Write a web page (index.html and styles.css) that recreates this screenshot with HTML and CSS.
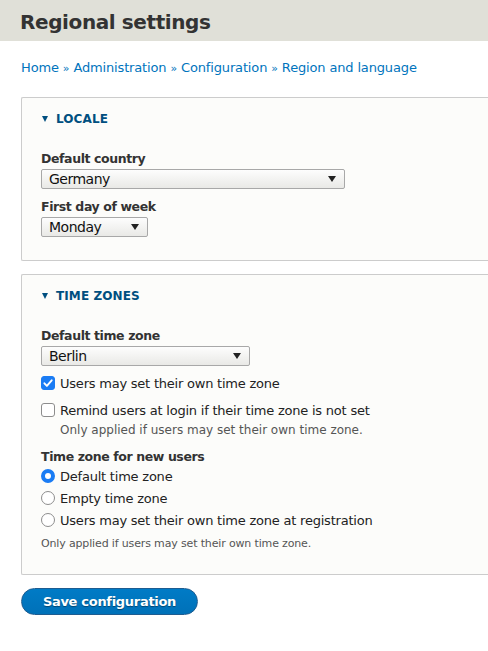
FILE: index.html
```html
<!DOCTYPE html>
<html>
<head>
<meta charset="utf-8">
<link rel="stylesheet" href="styles.css">
</head>
<body>
<header class="page-header">
  <h1 class="page-title">Regional settings</h1>
</header>
<main class="content">
  <nav class="breadcrumb">
    <a href="#">Home</a><span class="sep">»</span><a href="#">Administration</a><span class="sep">»</span><a href="#">Configuration</a><span class="sep">»</span><a href="#">Region and language</a>
  </nav>

  <section class="fieldset">
    <div class="legend"><span class="tri"></span>LOCALE</div>
    <div class="fs-body">
      <div class="item">
        <div class="label">Default country</div>
        <div class="select w-country"><span>Germany</span><span class="arrow"></span></div>
      </div>
      <div class="item">
        <div class="label">First day of week</div>
        <div class="select w-day"><span>Monday</span><span class="arrow"></span></div>
      </div>
    </div>
  </section>

  <section class="fieldset">
    <div class="legend"><span class="tri"></span>TIME ZONES</div>
    <div class="fs-body">
      <div class="item item-tight">
        <div class="label">Default time zone</div>
        <div class="select w-tz"><span>Berlin</span><span class="arrow"></span></div>
      </div>
      <div class="check-row">
        <span class="cb checked"><svg viewBox="0 0 14 14" width="14" height="14"><path d="M3.4 7.3 L5.9 9.9 L10.7 4.3" fill="none" stroke="#fff" stroke-width="1.9" stroke-linecap="round" stroke-linejoin="round"/></svg></span>
        <span class="opt">Users may set their own time zone</span>
      </div>
      <div class="check-row">
        <span class="cb"></span>
        <span class="opt">Remind users at login if their time zone is not set</span>
      </div>
      <div class="desc indent">Only applied if users may set their own time zone.</div>
      <div class="item radios">
        <div class="label">Time zone for new users</div>
        <div class="radio-row"><span class="rb checked"></span><span class="opt">Default time zone</span></div>
        <div class="radio-row"><span class="rb"></span><span class="opt">Empty time zone</span></div>
        <div class="radio-row"><span class="rb"></span><span class="opt">Users may set their own time zone at registration</span></div>
        <div class="desc small">Only applied if users may set their own time zone.</div>
      </div>
    </div>
  </section>

  <div class="actions">
    <button class="button-primary">Save configuration</button>
  </div>
</main>
</body>
</html>
```

FILE: styles.css
```css
* { box-sizing: border-box; }
html, body { margin: 0; padding: 0; }
body {
  background: #fff;
  color: #333;
  font-family: "DejaVu Sans", "Liberation Sans", sans-serif;
  font-size: 13px;
  width: 488px;
  overflow: hidden;
}
.page-header {
  background: #e0e0d8;
  height: 41px;
  padding: 0 20px;
  display: flex;
  align-items: center;
}
.page-title {
  margin: 2px 0 0;
  font-size: 20px;
  font-weight: bold;
  color: #333;
  letter-spacing: -0.4px;
}
.content {
  padding: 0 0 0 21px;
}
.breadcrumb {
  margin-top: 19px;
  height: 16px;
  font-size: 13px;
  letter-spacing: -0.15px;
  white-space: nowrap;
}
.breadcrumb a { color: #0074bd; text-decoration: none; }
.breadcrumb .sep { color: #0074bd; margin: 0 4px; font-size: 11px; }

.fieldset {
  margin-top: 21px;
  width: 480px;
  background: #fcfcfa;
  border: 1px solid #ccc;
  border-right: none;
  border-radius: 2px 0 0 2px;
  padding: 0 0 0 19px;
}
.fieldset + .fieldset { margin-top: 13px; }
.legend {
  height: 28px;
  padding-top: 14px;
  display: flex;
  align-items: center;
  color: #004f80;
  font-weight: bold;
  font-size: 12px;
  letter-spacing: 0.1px;
  line-height: 14px;
}
.tri {
  width: 0; height: 0;
  border-left: 3.5px solid transparent;
  border-right: 3.5px solid transparent;
  border-top: 6px solid #004f80;
  margin: 0 8px 0 1px;
}
.fs-body { padding: 25px 0 13px; }
.item { margin-bottom: 10px; }
.item-tight { margin-bottom: 7px; }
.label {
  font-weight: bold;
  font-size: 12.5px;
  letter-spacing: -0.4px;
  line-height: 16px;
  margin-bottom: 2px;
}
.select {
  height: 20px;
  border: 1px solid #a8a8a8;
  border-radius: 2px;
  background: linear-gradient(#fdfdfd, #e9e9e6);
  display: flex;
  align-items: center;
  justify-content: space-between;
  padding: 0 8px 0 7px;
  font-size: 14px;
  letter-spacing: -0.5px;
  color: #111;
}
.arrow {
  width: 0; height: 0;
  border-left: 4.5px solid transparent;
  border-right: 4.5px solid transparent;
  border-top: 6px solid #222;
}
.w-country { width: 304px; }
.w-day { width: 107px; }
.w-tz { width: 209px; }
.check-row {
  display: flex;
  align-items: center;
  height: 20px;
}
.check-row + .check-row { margin-top: 7px; }
.radio-row {
  display: flex;
  align-items: center;
  height: 22px;
}
.cb {
  width: 14px; height: 14px;
  border: 1px solid #8d8d8d;
  border-radius: 3px;
  background: #fff;
  margin-right: 5px;
  display: flex;
  flex: none;
}
.cb.checked { background: #1a7cf4; border-color: #1a7cf4; }
.cb.checked svg { margin: -1px; }
.rb {
  width: 14px; height: 14px;
  border: 1px solid #8d8d8d;
  border-radius: 50%;
  background: #fff;
  margin-right: 5px;
  flex: none;
}
.rb.checked {
  border: 4px solid #1a7cf4;
  background: #fff;
}
.opt { font-size: 13px; letter-spacing: -0.22px; color: #222; }
.desc { color: #555; font-size: 12px; line-height: 14px; }
.desc.indent { padding-left: 19px; margin-top: 3px; margin-bottom: 12px; }
.desc.small { font-size: 11px; letter-spacing: -0.15px; margin-top: 6px; }
.radios { margin-bottom: 10px; }
.radios .label { margin-bottom: 0; }
.actions { margin-top: 13px; }
.button-primary {
  width: 177px;
  height: 27px;
  border-radius: 14px;
  border: 1px solid #1e5c90;
  background: linear-gradient(#007bc6, #0071b8);
  color: #fff;
  font-family: "DejaVu Sans", sans-serif;
  font-weight: bold;
  font-size: 13px;
  letter-spacing: -0.3px;
  padding: 0;
  text-shadow: 0 1px 1px rgba(0,0,0,0.4);
}
```
